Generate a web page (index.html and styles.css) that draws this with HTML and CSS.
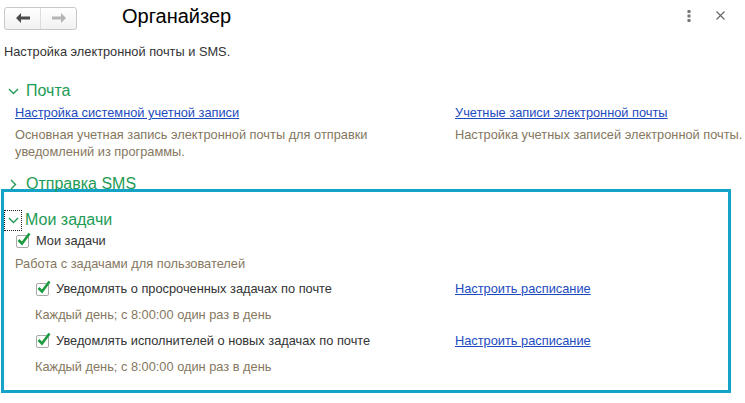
FILE: index.html
```html
<!DOCTYPE html>
<html lang="ru">
<head>
    <meta charset="UTF-8">
    <title>Органайзер</title>
    <link rel="stylesheet" href="styles.css">
</head>
<body>
    <div class="header">
        <div class="nav">
            <button class="nav-btn back">
                <svg width="14" height="10" viewBox="0 0 14 10"><path d="M0 5 L5 0 L5 3.5 L14 3.5 L14 6.5 L5 6.5 L5 10 Z" fill="#4a4a4a"/></svg>
            </button>
            <button class="nav-btn forward">
                <svg width="14" height="10" viewBox="0 0 14 10"><path d="M14 5 L9 0 L9 3.5 L0 3.5 L0 6.5 L9 6.5 L9 10 Z" fill="#b5b5b5"/></svg>
            </button>
        </div>
        <h1 class="title">Органайзер</h1>
        <div class="tools">
            <span class="more">
                <svg width="4" height="12" viewBox="0 0 4 12"><rect x="0.5" y="0" width="3" height="3" fill="#777"/><rect x="0.5" y="4.5" width="3" height="3" fill="#777"/><rect x="0.5" y="9" width="3" height="3" fill="#777"/></svg>
            </span>
            <span class="close">
                <svg width="9" height="9" viewBox="0 0 9 9"><path d="M0.5 0.5 L8.5 8.5 M8.5 0.5 L0.5 8.5" stroke="#666" stroke-width="1.1"/></svg>
            </span>
        </div>
    </div>

    <p class="intro">Настройка электронной почты и SMS.</p>

    <div class="group">
        <div class="group-title">
            <span class="chevron open"><svg width="11" height="7" viewBox="0 0 11 7"><path d="M1 1 L5.5 5.5 L10 1" fill="none" stroke="#1e9b55" stroke-width="1.4"/></svg></span>
            Почта
        </div>
        <div class="columns">
            <div class="col">
                <a href="#" class="link">Настройка системной учетной записи</a>
                <div class="note">Основная учетная запись электронной почты для отправки<br>уведомлений из программы.</div>
            </div>
            <div class="col right">
                <a href="#" class="link">Учетные записи электронной почты</a>
                <div class="note">Настройка учетных записей электронной почты.</div>
            </div>
        </div>
    </div>

    <div class="group">
        <div class="group-title sms">
            <span class="chevron"><svg width="7" height="11" viewBox="0 0 7 11"><path d="M1 1 L5.5 5.5 L1 10" fill="none" stroke="#1e9b55" stroke-width="1.4"/></svg></span>
            Отправка SMS
        </div>
    </div>

    <div class="frame">
        <div class="group-title tasks">
            <span class="chevron open focus"><svg width="11" height="7" viewBox="0 0 11 7"><path d="M1 1 L5.5 5.5 L10 1" fill="none" stroke="#1e9b55" stroke-width="1.4"/></svg></span>
            Мои задачи
        </div>
        <label class="check top">
            <span class="box"><svg width="16" height="16" viewBox="0 0 16 16"><path d="M2.5 8 L6 11.5 L13.5 1.5" fill="none" stroke="#1b9a3e" stroke-width="2.6"/></svg></span>
            Мои задачи
        </label>
        <div class="note tasks-note">Работа с задачами для пользователей</div>

        <div class="row">
            <label class="check">
                <span class="box"><svg width="16" height="16" viewBox="0 0 16 16"><path d="M2.5 8 L6 11.5 L13.5 1.5" fill="none" stroke="#1b9a3e" stroke-width="2.6"/></svg></span>
                Уведомлять о просроченных задачах по почте
            </label>
            <a href="#" class="link">Настроить расписание</a>
        </div>
        <div class="note sub">Каждый день; с 8:00:00 один раз в день</div>

        <div class="row second">
            <label class="check">
                <span class="box"><svg width="16" height="16" viewBox="0 0 16 16"><path d="M2.5 8 L6 11.5 L13.5 1.5" fill="none" stroke="#1b9a3e" stroke-width="2.6"/></svg></span>
                Уведомлять исполнителей о новых задачах по почте
            </label>
            <a href="#" class="link">Настроить расписание</a>
        </div>
        <div class="note sub">Каждый день; с 8:00:00 один раз в день</div>
    </div>
</body>
</html>
```

FILE: styles.css
```css
body {
    margin: 0;
    padding: 0;
    background: #fff;
    font-family: "Liberation Sans", Arial, sans-serif;
    font-size: 12.8px;
    color: #333;
}

.header {
    display: flex;
    align-items: center;
    height: 30px;
    padding: 3px 0 0 4px;
}

.nav {
    display: flex;
    width: 73px;
    height: 23px;
    border: 1px solid #c8c8c8;
    border-radius: 3px;
    box-sizing: border-box;
    background: linear-gradient(#ffffff, #f1f1f1);
}

.nav-btn {
    flex: 1;
    border: none;
    background: none;
    padding: 0;
    display: flex;
    align-items: center;
    justify-content: center;
}

.nav-btn.back {
    border-right: 1px solid #dcdcdc;
}

.title {
    margin: 0 0 0 45px;
    font-size: 20px;
    font-weight: normal;
    color: #000;
    flex: 1;
    line-height: 24px;
    padding-bottom: 5px;
}

.tools {
    display: flex;
    align-items: center;
    gap: 25px;
    padding-right: 20px;
    padding-bottom: 5px;
}

.more, .close {
    display: flex;
}

.intro {
    margin: 11px 0 0 4px;
    line-height: 16px;
    color: #333;
}

.group-title {
    display: flex;
    align-items: center;
    font-size: 16px;
    color: #1e9b55;
    height: 20px;
    margin: 21px 0 0 7px;
}

.chevron {
    width: 13px;
    display: flex;
    justify-content: center;
    margin-right: 6px;
}

.columns {
    display: flex;
    margin-top: 4px;
    padding-left: 15px;
}

.col {
    width: 440px;
    flex-shrink: 0;
}

.col.right {
    width: auto;
    white-space: nowrap;
}

.link {
    color: #1d4bbf;
    text-decoration: underline;
    display: block;
    line-height: 16px;
}

.note {
    color: #857760;
    line-height: 17px;
    margin-top: 5px;
}

.group-title.sms {
    margin-top: 17px;
    height: 14px;
}

.frame {
    margin: -2px 0 0 1px;
    width: 730px;
    height: 204px;
    box-sizing: border-box;
    border: 3px solid #13a3c6;
    padding-top: 18px;
}

.group-title.tasks {
    margin: 0 0 0 1px;
}

.chevron.focus {
    outline: 1px dotted #222;
    width: 16px;
    height: 19px;
    align-items: center;
    margin-right: 4px;
}

.check {
    display: flex;
    align-items: center;
    line-height: 16px;
    color: #333;
}

.check.top {
    margin: 3px 0 0 12px;
}

.box {
    position: relative;
    width: 13px;
    height: 13px;
    border: 1px solid #a9a9a9;
    box-sizing: border-box;
    border-radius: 2px;
    margin-right: 7px;
    background: #fff;
}

.box svg {
    position: absolute;
    left: -1px;
    top: -4px;
}

.tasks-note {
    margin: 6px 0 0 11px;
}

.row {
    display: flex;
    margin: 9px 0 0 32px;
}

.row.second {
    margin-top: 10px;
}

.row .check {
    width: 419px;
}

.note.sub {
    margin: 9px 0 0 31px;
}
```
